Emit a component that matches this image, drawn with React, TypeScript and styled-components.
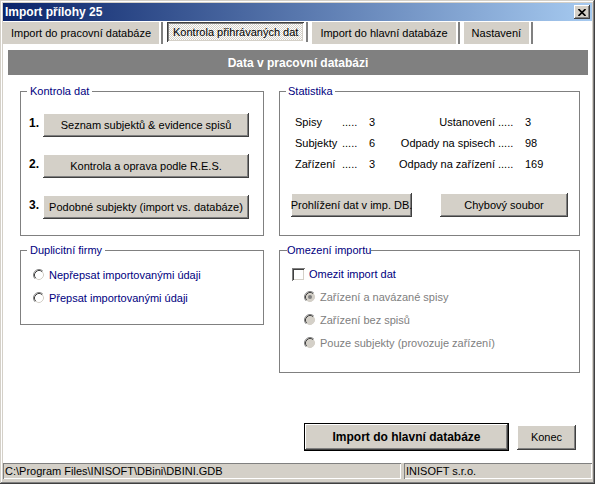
import React from "react";
import styled, { createGlobalStyle } from "styled-components";

const GlobalStyle = createGlobalStyle`
  html, body { margin: 0; padding: 0; background: #D4D0C8; }
  body { font-family: "Liberation Sans", Arial, sans-serif; font-size: 11px; color: #000; }
  * { box-sizing: border-box; }
`;

const C = {
  face: "#D4D0C8",
  shadow: "#808080",
  dark: "#404040",
  navy: "#000080",
};

const raised = `box-shadow: inset -1px -1px ${C.dark}, inset 1px 1px #fff, inset -2px -2px ${C.shadow}, inset 2px 2px ${C.face};`;

const Window = styled.div`
  width: 595px;
  height: 484px;
  display: flex;
  flex-direction: column;
  padding: 3px;
  background: ${C.face};
  box-shadow: inset -1px -1px ${C.dark}, inset 1px 1px ${C.face}, inset -2px -2px ${C.shadow}, inset 2px 2px #fff;
`;

const TitleBar = styled.div`
  height: 18px;
  flex: none;
  display: flex;
  align-items: center;
  justify-content: space-between;
  padding: 0 2px 0 2px;
  background: linear-gradient(to right, #0A246A, #A6CAF0);
  color: #fff;
  font-weight: bold;
  font-size: 12px;
`;

const CloseButton = styled.div`
  width: 16px;
  height: 14px;
  background: ${C.face};
  ${raised}
  display: flex;
  align-items: center;
  justify-content: center;
`;

const TabStrip = styled.div`
  height: 23px;
  flex: none;
  display: flex;
  align-items: flex-start;
  gap: 4px;
  padding-top: 1px;
  background: #fff;
`;

const Tab = styled.div`
  display: flex;
  padding-right: 2px;
  border-right: 2px solid ${C.shadow};
  background: #fff;
`;

const TabFace = styled.div<{ $active?: boolean }>`
  height: ${(p) => (p.$active ? 20 : 22)}px;
  display: flex;
  align-items: center;
  padding: 0 ${(p) => (p.$active ? 6 : 8)}px;
  white-space: nowrap;
  background: ${(p) =>
    p.$active
      ? `repeating-conic-gradient(${C.face} 0 25%, #fff 0 50%) 0 0 / 2px 2px`
      : C.face};
  ${(p) =>
    p.$active
      ? `box-shadow: inset 1px 1px ${C.dark}, inset -1px -1px #fff, inset 2px 2px ${C.shadow}, inset -2px -2px ${C.face};`
      : ""}
`;

const Body = styled.div`
  flex: 1;
  display: flex;
  flex-direction: column;
  background: #fff;
`;

const Header = styled.div`
  margin: 6px 4px 0 5px;
  height: 25px;
  display: flex;
  align-items: center;
  justify-content: center;
  background: ${C.shadow};
  color: #fff;
  font-weight: bold;
  font-size: 12px;
`;

const Groups = styled.div`
  display: grid;
  grid-template-columns: 244px 301px;
  column-gap: 15px;
  row-gap: 7px;
  align-items: start;
  margin: 9px 0 0 17px;
`;

const Group = styled.fieldset<{ $h: number }>`
  margin: 0;
  padding: 0;
  min-width: 0;
  border: 1px solid ${C.shadow};
  height: ${(p) => p.$h}px;
`;

const Legend = styled.legend<{ $ml: number; $pad: number }>`
  margin-left: ${(p) => p.$ml}px;
  padding: 0 ${(p) => p.$pad}px;
  color: ${C.navy};
  line-height: 14px;
  font-size: 11px;
`;

const GroupBody = styled.div<{ $pt: number; $pl: number; $gap: number }>`
  display: flex;
  flex-direction: column;
  padding-top: ${(p) => p.$pt}px;
  padding-left: ${(p) => p.$pl}px;
  gap: ${(p) => p.$gap}px;
`;

const StepRow = styled.div`
  display: flex;
  align-items: flex-start;
`;

const StepNo = styled.div`
  width: 14px;
  padding-top: 4px;
  line-height: 13px;
  font-weight: bold;
  font-size: 12px;
`;

const Button = styled.div<{ $w: number; $h?: number; $bold?: boolean; $default?: boolean }>`
  width: ${(p) => p.$w}px;
  height: ${(p) => p.$h ?? 24}px;
  display: flex;
  align-items: center;
  justify-content: center;
  white-space: nowrap;
  background: ${C.face};
  font-weight: ${(p) => (p.$bold ? "bold" : "normal")};
  font-size: ${(p) => (p.$bold ? 12 : 11)}px;
  ${raised}
  ${(p) => (p.$default ? "border: 1px solid #000;" : "")}
`;

const StatsGrid = styled.div`
  display: grid;
  grid-template-columns: 47px 27px 30px 99px 27px auto;
  grid-auto-rows: 21px;
  align-items: center;
  margin-left: 15px;
  white-space: nowrap;
`;

const StatRight = styled.div`
  text-align: right;
  padding-right: 3px;
`;

const StatButtons = styled.div`
  display: flex;
  gap: 28px;
  margin: 19px 0 0 11px;
`;

const OptionRow = styled.div<{ $indent?: number; $disabled?: boolean }>`
  display: flex;
  align-items: center;
  height: 16px;
  gap: 4px;
  padding-left: ${(p) => p.$indent ?? 0}px;
  color: ${(p) => (p.$disabled ? C.shadow : C.navy)};
  white-space: nowrap;
`;

const CheckBox = styled.span`
  width: 13px;
  height: 13px;
  flex: none;
  background: #fff;
  box-shadow: inset 1px 1px ${C.shadow}, inset -1px -1px #fff, inset 2px 2px ${C.dark}, inset -2px -2px ${C.face};
`;

const RadioSvg = styled.svg`
  flex: none;
  display: block;
`;

const Footer = styled.div`
  margin-top: auto;
  display: flex;
  justify-content: flex-end;
  align-items: center;
  gap: 8px;
  padding: 0 16px 12px 0;
`;

const StatusBar = styled.div`
  height: 18px;
  flex: none;
  display: flex;
  align-items: flex-start;
  gap: 3px;
`;

const StatusPanel = styled.div<{ $w?: number }>`
  height: 16px;
  line-height: 16px;
  padding: 0 2px;
  white-space: nowrap;
  ${(p) => (p.$w ? `width: ${p.$w}px;` : "flex: 1;")}
  box-shadow: inset 1px 1px ${C.shadow}, inset -1px -1px #fff;
`;

const Radio: React.FC<{ disabled?: boolean; checked?: boolean }> = ({ disabled, checked }) => (
  <RadioSvg width="12" height="12" viewBox="0 0 12 12">
    <circle cx="6" cy="6" r="5" fill={disabled ? C.face : "#fff"} />
    <path d="M2.11 9.89 A5.5 5.5 0 0 1 9.89 2.11" stroke={C.shadow} fill="none" />
    <path d="M9.89 2.11 A5.5 5.5 0 0 1 2.11 9.89" stroke="#fff" fill="none" />
    <path d="M2.82 9.18 A4.5 4.5 0 0 1 9.18 2.82" stroke={C.dark} fill="none" />
    <path d="M9.18 2.82 A4.5 4.5 0 0 1 2.82 9.18" stroke={C.face} fill="none" />
    {checked && <circle cx="6" cy="6" r="2" fill={disabled ? C.shadow : "#000"} />}
  </RadioSvg>
);

const stats = [
  ["Spisy", "3", "Ustanovení", "3"],
  ["Subjekty", "6", "Odpady na spisech", "98"],
  ["Zařízení", "3", "Odpady na zařízení", "169"],
];

const steps = [
  ["1.", "Seznam subjektů & evidence spisů"],
  ["2.", "Kontrola a oprava podle R.E.S."],
  ["3.", "Podobné subjekty (import vs. databáze)"],
];

export default function App() {
  return (
    <>
      <GlobalStyle />
      <Window>
        <TitleBar>
          <span>Import přílohy 25</span>
          <CloseButton>
            <svg width="8" height="7" viewBox="0 0 8 7">
              <path d="M0.5 0 L7.5 7 M7.5 0 L0.5 7" stroke="#000" strokeWidth="1.6" />
            </svg>
          </CloseButton>
        </TitleBar>
        <TabStrip>
          <Tab><TabFace>Import do pracovní databáze</TabFace></Tab>
          <Tab><TabFace $active>Kontrola přihrávaných dat</TabFace></Tab>
          <Tab><TabFace>Import do hlavní databáze</TabFace></Tab>
          <Tab><TabFace>Nastavení</TabFace></Tab>
        </TabStrip>
        <Body>
          <Header>Data v pracovní databázi</Header>
          <Groups>
            <Group $h={152}>
              <Legend $ml={6} $pad={3}>Kontrola dat</Legend>
              <GroupBody $pt={15} $pl={8} $gap={17}>
                {steps.map(([n, t]) => (
                  <StepRow key={n}>
                    <StepNo>{n}</StepNo>
                    <Button $w={206}>{t}</Button>
                  </StepRow>
                ))}
              </GroupBody>
            </Group>
            <Group $h={152}>
              <Legend $ml={6} $pad={2}>Statistika</Legend>
              <GroupBody $pt={13} $pl={0} $gap={0}>
                <StatsGrid>
                  {stats.map(([a, av, b, bv]) => (
                    <React.Fragment key={a}>
                      <span>{a}</span>
                      <span>.....</span>
                      <span>{av}</span>
                      <StatRight>{b}</StatRight>
                      <span>.....</span>
                      <span>{bv}</span>
                    </React.Fragment>
                  ))}
                </StatsGrid>
                <StatButtons>
                  <Button $w={121}>Prohlížení dat v imp. DB.</Button>
                  <Button $w={128}>Chybový soubor</Button>
                </StatButtons>
              </GroupBody>
            </Group>
            <Group $h={82}>
              <Legend $ml={6} $pad={3}>Duplicitní firmy</Legend>
              <GroupBody $pt={10} $pl={12} $gap={7}>
                <OptionRow><Radio />Nepřepsat importovanými údaji</OptionRow>
                <OptionRow><Radio />Přepsat importovanými údaji</OptionRow>
              </GroupBody>
            </Group>
            <Group $h={130}>
              <Legend $ml={7} $pad={0}>Omezení importu</Legend>
              <GroupBody $pt={9} $pl={12} $gap={7}>
                <OptionRow><CheckBox />Omezit import dat</OptionRow>
                <OptionRow $indent={12} $disabled><Radio disabled checked />Zařízení a navázané spisy</OptionRow>
                <OptionRow $indent={12} $disabled><Radio disabled />Zařízení bez spisů</OptionRow>
                <OptionRow $indent={12} $disabled><Radio disabled />Pouze subjekty (provozuje zařízení)</OptionRow>
              </GroupBody>
            </Group>
          </Groups>
          <Footer>
            <Button $w={205} $h={28} $bold $default>Import do hlavní databáze</Button>
            <Button $w={59} $h={25}>Konec</Button>
          </Footer>
        </Body>
        <StatusBar>
          <StatusPanel $w={398}>C:\Program Files\INISOFT\DBini\DBINI.GDB</StatusPanel>
          <StatusPanel>INISOFT s.r.o.</StatusPanel>
        </StatusBar>
      </Window>
    </>
  );
}
